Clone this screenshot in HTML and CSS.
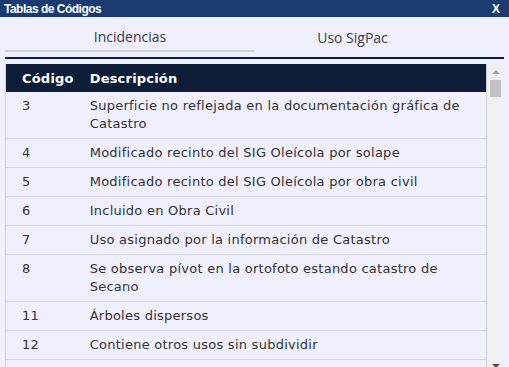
FILE: index.html
```html
<!DOCTYPE html>
<html lang="es">
<head>
    <meta charset="UTF-8">
    <title>Tablas de Códigos</title>
    <link rel="stylesheet" href="styles.css">
</head>
<body>
    <div class="titlebar">
        <span class="title">Tablas de Códigos</span>
        <span class="close">X</span>
    </div>
    <div class="tabs">
        <div class="tab active">Incidencias</div>
        <div class="tab">Uso SigPac</div>
    </div>
    <div class="tabline"></div>
    <div class="panel">
        <div class="tablewrap">
            <table>
                <thead>
                    <tr>
                        <th class="code">Código</th>
                        <th>Descripción</th>
                    </tr>
                </thead>
                <tbody>
                    <tr><td class="code">3</td><td>Superficie no reflejada en la documentación gráfica de Catastro</td></tr>
                    <tr><td class="code">4</td><td>Modificado recinto del SIG Oleícola por solape</td></tr>
                    <tr><td class="code">5</td><td>Modificado recinto del SIG Oleícola por obra civil</td></tr>
                    <tr><td class="code">6</td><td>Incluido en Obra Civil</td></tr>
                    <tr><td class="code">7</td><td>Uso asignado por la información de Catastro</td></tr>
                    <tr><td class="code">8</td><td>Se observa pívot en la ortofoto estando catastro de Secano</td></tr>
                    <tr><td class="code">11</td><td>Árboles dispersos</td></tr>
                    <tr><td class="code">12</td><td>Contiene otros usos sin subdividir</td></tr>
                </tbody>
            </table>
        </div>
        <div class="scrollbar">
            <div class="arrow up"></div>
            <div class="thumb"></div>
            <div class="track"></div>
            <div class="arrow down"></div>
        </div>
    </div>
</body>
</html>
```

FILE: styles.css
```css
html, body {
    margin: 0;
    height: 100%;
    overflow: hidden;
}
body {
    background-color: #f0effd;
    font-family: "DejaVu Sans", Verdana, sans-serif;
    color: #333;
}
.titlebar {
    display: flex;
    justify-content: space-between;
    align-items: center;
    height: 17px;
    padding: 0 9px 0 4px;
    background-color: #1a3b6f;
    color: #fff;
    font-family: "Liberation Sans", Arial, sans-serif;
    font-weight: bold;
    font-size: 12px;
    letter-spacing: -0.5px;
}
.close {
    font-size: 12px;
    letter-spacing: 0;
}
.tabs {
    display: flex;
    margin: 1px 5px 0 5px;
    height: 34px;
}
.tab {
    width: 250px;
    padding-top: 5px;
    display: flex;
    align-items: center;
    justify-content: center;
    font-family: "Open Sans", sans-serif;
    font-size: 14px;
    color: #3c3c44;
    box-sizing: border-box;
}
.tab.active {
    border-bottom: 2px solid #d3d3d6;
}
.tab + .tab {
    width: 195px;
}
.tabline {
    height: 2px;
    margin: 5px 5px 0 5px;
    background-color: #0e1d38;
}
.panel {
    display: flex;
    margin: 5px 5px 0 5px;
    height: 310px;
}
.tablewrap {
    width: 482px;
    overflow: hidden;
    border-left: 1px solid #cfcfd6;
    border-right: 1px solid #cfcfd6;
    box-sizing: border-box;
}
table {
    width: 100%;
    border-collapse: collapse;
    font-size: 13px;
    letter-spacing: 0.25px;
}
th {
    background-color: #0e1d38;
    color: #fff;
    text-align: left;
    font-size: 13px;
    letter-spacing: 0.2px;
    height: 28px;
    padding: 0 8px;
}
td {
    padding: 5px 8px;
    line-height: 18px;
    border-bottom: 1px solid #d7d7df;
    vertical-align: top;
}
.code {
    width: 50px;
    padding-left: 16px;
}
.scrollbar {
    width: 17px;
    background-color: #f0f0f0;
    display: flex;
    flex-direction: column;
    align-items: center;
}
.arrow {
    width: 0;
    height: 0;
    border-left: 4px solid transparent;
    border-right: 4px solid transparent;
    margin: 6px 0;
}
.arrow.up {
    border-bottom: 4px solid #a3a3a3;
}
.arrow.down {
    border-top: 4px solid #505050;
}
.thumb {
    width: 11px;
    height: 17px;
    background-color: #c1c1c1;
}
.track {
    flex: 1;
}
```
